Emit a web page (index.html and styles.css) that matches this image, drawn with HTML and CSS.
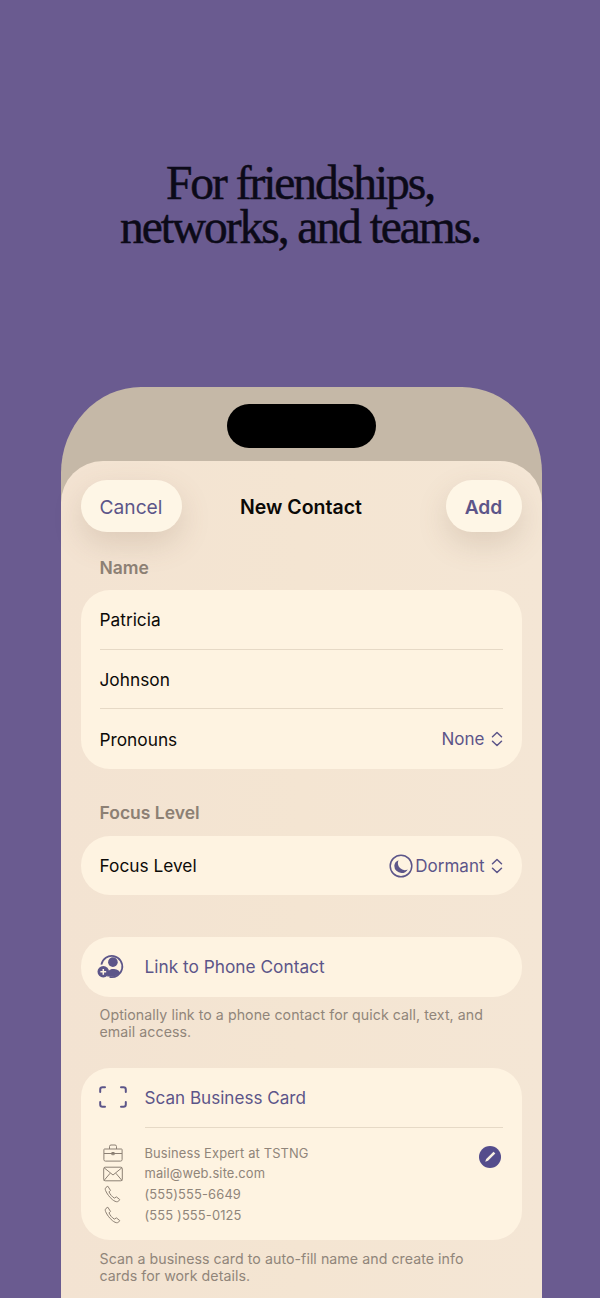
FILE: index.html
```html
<!DOCTYPE html>
<html lang="en">
<head>
<meta charset="utf-8">
<title>New Contact</title>
<link rel="stylesheet" href="styles.css">
</head>
<body>
<main class="page">
  <h1 class="headline">For friendships,<br>networks, and teams.</h1>
  <div class="phone">
    <div class="island"></div>
    <div class="sheet">
      <header class="nav">
        <button class="pill pill-cancel">Cancel</button>
        <div class="nav-title">New Contact</div>
        <button class="pill pill-add">Add</button>
      </header>

      <div class="section-label first">Name</div>
      <section class="card">
        <div class="row"><span>Patricia</span></div>
        <div class="row divided"><span>Johnson</span></div>
        <div class="row divided">
          <span>Pronouns</span>
          <span class="value">None
            <svg class="updown" viewBox="0 0 12 18"><path d="M1.500 6.700 6 2.500l4.500 4.200M1.500 11.300 6 15.500l4.500-4.200"/></svg>
          </span>
        </div>
      </section>

      <div class="section-label second">Focus Level</div>
      <section class="card">
        <div class="row row-single">
          <span>Focus Level</span>
          <span class="value tight">
            <svg class="moon" viewBox="0 0 24 24"><circle class="ring" cx="12" cy="12" r="10.800"/><path class="fill" d="M9.500 6.200a7 7 0 0 0 9.300 9.200A7.300 7.300 0 0 1 12.500 19 7.300 7.300 0 0 1 5.300 11.700a6.500 6.500 0 0 1 4.200-5.500z"/></svg>
            Dormant
            <svg class="updown gap" viewBox="0 0 12 18"><path d="M1.500 6.700 6 2.500l4.500 4.200M1.500 11.300 6 15.500l4.500-4.200"/></svg>
          </span>
        </div>
      </section>

      <section class="card link-card">
        <div class="row action">
          <svg class="icon-link" viewBox="0 0 28 26">
            <path class="ring-line" d="M4.500 11A11 11 0 1 1 13 23.800"/>
            <circle class="fill" cx="16.500" cy="8.500" r="5"/>
            <path class="fill" d="M10.500 23c0-5 2.500-7.500 6-7.500s6.800 1.500 7.500 4c-2 2.600-5 4-8 4h-5.500z"/>
            <circle class="fill" cx="6.500" cy="18.500" r="6"/>
            <path class="plus" d="M6.500 15.500v6M3.500 18.500h6"/>
          </svg>
          <span>Link to Phone Contact</span>
        </div>
      </section>
      <p class="help help-link">Optionally link to a phone contact for quick call, text, and email access.</p>

      <section class="card scan-card">
        <div class="row action">
          <svg class="icon-scan" viewBox="0 0 28 22">
            <path d="M6 1.200H3.500A2.300 2.300 0 0 0 1.200 3.500V6M22 1.200h2.500a2.300 2.300 0 0 1 2.300 2.300V6M6 20.800H3.500a2.300 2.300 0 0 1-2.300-2.300V16M22 20.800h2.500a2.300 2.300 0 0 0 2.300-2.300V16"/>
          </svg>
          <span class="scan-label">Scan Business Card</span>
        </div>
        <div class="scan-rule"></div>
        <div class="details">
          <ul class="info">
            <li>
              <svg class="info-icon" viewBox="0 0 20 18"><path d="M1.500 5h17a.6.6 0 0 1 .6.600v10a1.500 1.500 0 0 1-1.500 1.500H2.400A1.500 1.500 0 0 1 .9 15.600v-10A.6.6 0 0 1 1.500 5zM6.500 5V2.500A1.500 1.500 0 0 1 8 1h4a1.500 1.500 0 0 1 1.500 1.500V5M1 9.500h18M8.800 8.500h2.400v2.200H8.800z"/></svg>
              <span>Business Expert at TSTNG</span>
            </li>
            <li>
              <svg class="info-icon" viewBox="0 0 20 15"><rect x=".7" y=".7" width="18.600" height="13.600" rx="1.500"/><path d="m1 1.200 9 7.300 9-7.300M1 14l6.200-7.300M19 14l-6.200-7.300"/></svg>
              <span>mail@web.site.com</span>
            </li>
            <li>
              <svg class="info-icon" viewBox="0 0 20 18"><path d="M4.800 1.200 3 2.400c-.9.700-.9 2-.4 3.200 1.300 3.100 3.800 6.500 6.800 9 1.700 1.400 3.700 2.400 5 2.100 1-.2 1.900-1.200 2.300-2.200l-3.300-2.600-2 1.200C9 11.800 7 9.200 6 6.900l1.500-1.500z"/></svg>
              <span>(555)555-6649</span>
            </li>
            <li>
              <svg class="info-icon" viewBox="0 0 20 18"><path d="M4.800 1.200 3 2.400c-.9.700-.9 2-.4 3.200 1.300 3.100 3.800 6.500 6.800 9 1.700 1.400 3.700 2.400 5 2.100 1-.2 1.900-1.200 2.300-2.200l-3.300-2.600-2 1.200C9 11.800 7 9.200 6 6.900l1.500-1.500z"/></svg>
              <span>(555 )555-0125</span>
            </li>
          </ul>
          <div class="edit-badge">
            <svg viewBox="0 0 22 22"><path d="m6.200 15.800 1-2.800 7.300-7.300 1.800 1.800L9 14.800z"/></svg>
          </div>
        </div>
      </section>
      <p class="help help-scan">Scan a business card to auto-fill name and create info cards for work details.</p>
    </div>
  </div>
</main>
</body>
</html>
```
FILE: styles.css
```css
* { box-sizing: border-box; }
html, body { margin: 0; padding: 0; }
body {
  width: 600px;
  height: 1298px;
  overflow: hidden;
  background: #6a5b90;
  font-family: Inter, "Noto Sans", sans-serif;
  color: #0c0a08;
}
.page { display: flex; flex-direction: column; align-items: center; height: 1298px; overflow: hidden; }
.headline {
  margin: 161px 0 0;
  font-family: "Liberation Serif", serif;
  font-weight: 400;
  font-size: 47.500px;
  line-height: 44px;
  letter-spacing: -2.050px;
  text-align: center;
  color: #0c0a18;
  -webkit-text-stroke: .5px #0c0a18;
}
.phone {
  margin-top: 138px;
  margin-left: 2px;
  width: 481px;
  height: 1000px;
  flex: none;
  background: #c5b8a7;
  border-radius: 80px 80px 0 0 / 86px 86px 0 0;
  padding: 17px 0 0;
  display: flex;
  flex-direction: column;
  align-items: stretch;
}
.island {
  align-self: center;
  width: 149px;
  height: 43.500px;
  border-radius: 22px;
  background: #000;
  flex: none;
}
.sheet {
  margin-top: 13.500px;
  flex: 1;
  background: linear-gradient(90deg, #f3e3d2 0%, #f4e5d2 50%, #f4e6d5 100%);
  border-radius: 42px 42px 0 0;
  padding: 19px 20px 0;
}
.nav { display: grid; grid-template-columns: 1fr auto 1fr; align-items: center; height: 52px; }
.pill {
  height: 52px;
  border: 0;
  border-radius: 26px;
  background: #fef6e6;
  font: 400 19.200px Inter, sans-serif;
  color: #5c5589;
  box-shadow: 0 12px 30px rgba(120, 95, 70, .18);
  padding: 2px 0 0;
}
.pill-cancel { width: 101px; justify-self: start; }
.pill-add { width: 76px; font-weight: 600; justify-self: end; }
.nav-title { font-size: 19.500px; font-weight: 600; color: #0b0906; padding-top: 2px; }
.section-label {
  color: #8c8074;
  font-size: 17.500px;
  font-weight: 600;
  line-height: 22px;
  padding-left: 19px;
}
.first { margin-top: 24.500px; margin-bottom: 11.500px; }
.second { margin-top: 33.500px; margin-bottom: 12px; }
.card { background: #fef3e1; border-radius: 29px; }
.row {
  position: relative;
  height: 59.500px;
  display: flex;
  align-items: center;
  justify-content: space-between;
  padding: 0 19px;
  font-size: 17.300px;
  color: #0c0a08;
}
.row.divided + .row.divided { padding-top: 1px; }
.row-single { height: 58.500px; }
.row.divided::before {
  content: "";
  position: absolute;
  top: -1px;
  left: 19px;
  right: 19px;
  height: 1px;
  background: #e6d9c6;
}
.value { display: flex; align-items: center; color: #5c5589; gap: 6px; font-size: 17px; }
.row-single .value { padding-top: 1px; }
.value.tight { gap: 2px; }
.updown { width: 12px; height: 18px; fill: none; stroke: #5c5589; stroke-width: 1.500; stroke-linecap: round; stroke-linejoin: round; }
.updown.gap { margin-left: 4px; }
.moon { width: 24px; height: 24px; }
.ring { fill: none; stroke: #5c5589; stroke-width: 1.500; }
.fill { fill: #5c5589; }
.link-card { margin-top: 42.500px; }
.link-card .action { padding-bottom: 1px; }
.action { justify-content: flex-start; gap: 21px; color: #5c5589; padding-left: 16px; }
.icon-link { width: 27px; height: 25px; flex: none; overflow: visible; }
.ring-line { fill: none; stroke: #5c5589; stroke-width: 1.800; }
.plus { stroke: #fef3e1; stroke-width: 1.600; fill: none; }
.help {
  margin: 0;
  padding: 0 19px;
  font-size: 14.200px;
  line-height: 17px;
  color: #90857a;
  letter-spacing: .05px;
}
.help-link { margin-top: 9px; }
.scan-card { margin-top: 28.500px; height: 172px; }
.scan-card .action { padding-left: 18px; gap: 18px; height: 58.500px; }
.scan-label { font-size: 17.100px; }
.icon-scan { width: 28px; height: 22px; flex: none; fill: none; stroke: #5c5589; stroke-width: 2; stroke-linecap: round; }
.scan-rule { height: 1px; margin-left: 64px; margin-right: 19px; background: #e6d9c6; }
.details { display: flex; justify-content: space-between; padding: 16.500px 21px 0 22px; }
.info { list-style: none; margin: 0; padding: 0; display: flex; flex-direction: column; gap: 2.700px; }
.info li { display: flex; align-items: center; height: 18px; font-size: 12.900px; color: #90857a; letter-spacing: .14px; }
.info-icon { width: 20px; height: 18px; margin-right: 22px; flex: none; fill: none; stroke: #8c8074; stroke-width: 1; stroke-linejoin: round; }
.edit-badge { width: 22px; height: 22px; border-radius: 50%; background: #544c8c; margin-top: 1.500px; }
.edit-badge svg { display: block; width: 22px; height: 22px; fill: #f7efe2; }
.help-scan { margin-top: 10px; }
```
